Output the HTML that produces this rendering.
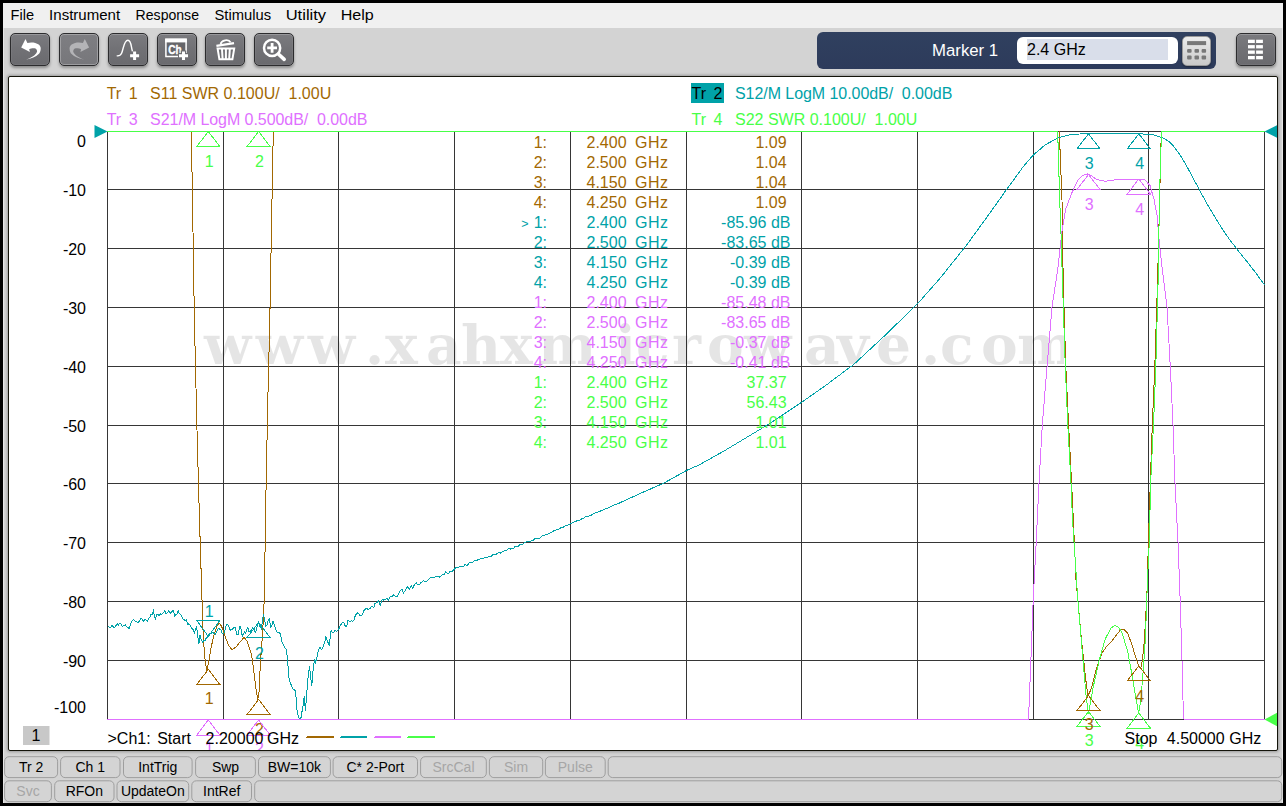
<!DOCTYPE html>
<html lang="en">
<head>
<meta charset="utf-8">
<title>Network Analyzer</title>
<style>
html,body{margin:0;padding:0;background:#000;}
body{width:1286px;height:806px;overflow:hidden;position:relative;font-family:"Liberation Sans",Arial,sans-serif;}
#win{position:absolute;left:3px;top:3px;width:1280px;height:800px;background:#d3d3d3;}
#win:before{content:"";position:absolute;left:0;top:25px;width:1px;bottom:0;background:#e6e6e6;}
#win:after{content:"";position:absolute;right:0;top:25px;width:1px;bottom:0;background:#e6e6e6;}
#menubar{position:absolute;left:3px;top:3px;width:1280px;height:25px;background:#f0f0f0;}
#menubar span{position:absolute;top:4px;font-size:15px;line-height:17px;color:#000;white-space:nowrap;transform-origin:0 50%;}
.tb{position:absolute;top:33px;width:38px;height:31px;border:1px solid #2c2c2e;border-radius:5px;background:linear-gradient(#7b7b7f 0%,#727276 45%,#6a6a6e 100%);box-shadow:0 2px 3px rgba(0,0,0,.35), inset 0 1px 0 rgba(255,255,255,.18), inset 0 0 0 1px rgba(255,255,255,.06);}
.tb.dis{background:linear-gradient(#7e7e82,#77777b);box-shadow:0 2px 3px rgba(0,0,0,.3), inset 0 0 0 1px rgba(255,255,255,.28);}
.tb svg{position:absolute;left:0;top:0;}
#mk{position:absolute;left:817px;top:32px;width:399px;height:36.5px;border-radius:6px;background:linear-gradient(#30405f,#2d3b5b);}
#mk .lbl{position:absolute;left:115px;top:9px;color:#fff;font-size:16.8px;line-height:20px;white-space:nowrap;}
#mk .inp{position:absolute;left:200px;top:4.5px;width:161px;height:27.5px;border-radius:6px;background:#fff;}
#mk .sel{position:absolute;left:10px;top:2.5px;width:141px;height:21px;background:#d9deea;}
#mk .val{position:absolute;left:10px;top:3px;font-size:16px;line-height:20px;color:#000;white-space:nowrap;}
#calc{position:absolute;left:1182px;top:36px;width:27px;height:28px;border:1px solid #9a9a9a;border-radius:5px;background:linear-gradient(#ececec,#c9c9c9);box-shadow:0 1px 2px rgba(0,0,0,.4);}
#panel{position:absolute;left:8px;top:76px;width:1268px;height:673px;border:1px solid #14140a;border-radius:2px;background:#fff;box-shadow:0 0 3px 1px rgba(0,0,0,.28);}
#plot{position:absolute;left:0;top:0;}
svg text{white-space:pre;}
.sb{position:absolute;height:19.5px;border:1px solid #a6a6a6;border-radius:5px;background:#d4d4d4;font-size:14px;line-height:20px;text-align:center;color:#000;white-space:nowrap;box-sizing:content-box;}
.sb.r1{top:756px;}
.sb.r2{top:780.5px;}
.sb.off{color:#a8a8a8;}
</style>
</head>
<body>
<div id="win"></div>
<div id="menubar">
</div>

<div class="tb" style="left:10px"><!--ICON1--></div>
<div class="tb dis" style="left:59px"><!--ICON2--></div>
<div class="tb" style="left:108px"><!--ICON3--></div>
<div class="tb" style="left:157px"><!--ICON4--></div>
<div class="tb" style="left:205px"><!--ICON5--></div>
<div class="tb" style="left:254px"><!--ICON6--></div>

<div id="mk">
  <div class="lbl">Marker 1</div>
  <div class="inp"><div class="sel"></div><div class="val">2.4 GHz</div></div>
</div>
<div id="calc"><!--ICONCALC--></div>
<div class="tb" style="left:1235.5px"><!--ICONGRID--></div>

<div id="panel"></div>
<svg id="plot" width="1286" height="806" viewBox="0 0 1286 806">
<defs><clipPath id="pc"><rect x="9" y="77" width="1268" height="673"/></clipPath></defs><g clip-path="url(#pc)">
<path d="M107.5 131.0 V720.0 M223.5 131.0 V720.0 M338.5 131.0 V720.0 M454.5 131.0 V720.0 M570.5 131.0 V720.0 M686.5 131.0 V720.0 M801.5 131.0 V720.0 M917.5 131.0 V720.0 M1033.5 131.0 V720.0 M1148.5 131.0 V720.0 M1264.5 131.0 V720.0 M107.0 131.5 H1265.0 M107.0 189.5 H1265.0 M107.0 248.5 H1265.0 M107.0 307.5 H1265.0 M107.0 366.5 H1265.0 M107.0 425.5 H1265.0 M107.0 483.5 H1265.0 M107.0 542.5 H1265.0 M107.0 601.5 H1265.0 M107.0 660.5 H1265.0 M107.0 719.5 H1265.0" stroke="#363636" stroke-width="1" fill="none" shape-rendering="crispEdges"/>
<clipPath id="wc"><rect x="200" y="300" width="864" height="90"/></clipPath>
<text x="204 255.7 307.7 365 385 426 461 500 538 615 636 672 707 744 804 837 876 921 940 981 1017" y="364.3" clip-path="url(#wc)" font-family="'DejaVu Serif','Liberation Serif',serif" font-weight="bold" font-size="55" fill="#000" fill-opacity="0.10">www.xahxmicrowave.com</text>
<polyline points="191.3,131.5 192.5,200.0 194.4,320.0 197.0,430.0 199.5,520.0 201.7,590.0 203.0,630.0 204.5,655.0 206.8,671.0 209.0,660.0 211.0,648.0 213.5,637.0 216.5,627.0 219.0,623.0 221.5,626.0 225.0,636.0 228.5,645.0 232.0,649.7 236.0,647.0 240.0,642.0 244.0,637.5 247.0,641.0 249.5,648.0 251.5,655.0 253.3,667.0 254.9,680.5 256.4,692.0 257.8,699.5 259.4,690.0 260.1,669.0 261.3,650.0 262.4,636.0 263.9,609.0 264.6,580.0 265.8,500.0 267.8,400.0 269.8,320.0 271.8,210.0 273.3,131.5" fill="none" stroke="#A26802" stroke-width="1" shape-rendering="crispEdges"/>
<polyline points="1059.3,131.5 1062.0,200.0 1063.2,280.0 1065.8,366.8 1068.6,424.8 1071.6,483.0 1073.8,530.0 1076.0,580.0 1081.4,639.0 1085.9,680.7 1088.0,695.6 1089.8,692.0 1091.8,686.7 1096.3,668.8 1102.3,652.4 1107.0,646.0 1111.2,642.0 1115.7,636.0 1120.0,630.5 1123.7,629.0 1127.6,633.0 1132.0,645.0 1136.5,660.0 1138.9,665.8 1140.3,668.0 1141.4,666.0 1142.4,660.0 1144.5,639.0 1146.9,594.4 1148.4,542.0 1150.3,483.0 1152.3,424.8 1154.8,366.8 1157.6,280.0 1159.6,200.0 1161.3,131.5" fill="none" stroke="#A26802" stroke-width="1" shape-rendering="crispEdges"/>
<polyline points="107.5,626.9 108.9,627.0 110.2,627.7 111.4,626.2 112.4,625.4 113.6,627.6 115.0,627.1 115.9,625.8 117.3,624.0 118.5,625.1 119.4,623.6 120.9,623.4 122.1,626.6 123.1,625.8 124.5,625.7 125.6,625.0 126.8,627.0 128.0,627.6 129.4,628.5 130.5,624.7 131.6,621.7 132.7,620.0 133.8,619.7 135.1,620.9 136.6,622.0 137.9,622.4 139.1,621.3 140.3,619.5 141.2,618.0 142.5,619.8 143.8,621.6 145.1,619.2 146.2,620.4 147.3,621.2 148.7,618.8 149.9,617.0 150.9,614.8 152.1,614.9 153.3,610.6 154.4,615.2 155.5,619.8 156.6,614.7 158.0,614.4 159.2,615.5 160.6,613.9 161.9,614.1 163.3,613.0 164.7,610.5 165.9,613.4 167.3,612.8 168.6,610.9 169.7,612.8 170.8,613.1 172.2,611.1 173.5,610.3 174.7,615.8 175.6,614.8 176.9,614.0 178.3,610.9 179.4,613.8 180.4,614.2 181.6,615.9 183.0,619.3 183.9,619.3 185.3,621.0 186.3,620.1 187.8,624.6 188.8,623.8 190.1,625.0 191.1,626.8 192.5,629.6 193.5,629.9 194.6,633.5 195.5,629.1 196.6,626.6 197.6,634.7 198.8,644.1 200.0,635.4 201.1,639.2 202.5,642.4 203.6,640.9 205.0,640.5 206.1,638.3 207.6,637.0 209.0,634.0 210.1,633.4 211.0,634.2 211.9,632.8 212.9,632.4 214.0,633.4 215.3,634.0 216.3,632.7 217.3,629.8 218.4,628.9 219.5,629.0 220.9,629.4 222.0,632.8 223.2,634.0 224.4,632.0 225.5,627.8 226.8,624.1 227.7,624.0 229.2,627.6 230.2,630.1 231.6,629.6 232.5,629.2 234.0,627.5 235.3,627.9 236.8,634.1 238.0,634.8 239.1,629.1 240.1,626.1 241.1,629.2 242.2,636.6 243.2,634.1 244.6,632.1 245.6,633.6 246.6,629.6 247.9,627.8 249.1,632.0 250.1,631.4 251.3,630.4 252.7,627.6 254.0,629.2 255.3,632.6 256.5,629.3 257.4,624.8 258.5,622.0 259.9,626.3 261.3,628.9 262.4,621.6 263.4,614.1 264.7,620.8 265.9,626.3 267.0,625.3 268.2,620.7 269.2,618.9 270.7,627.0 271.7,625.9 273.1,621.2 274.5,625.0 275.9,630.0 276.9,632.0 278.0,632.6 279.2,632.5 280.2,633.9 281.1,637.0 282.1,642.4 283.0,643.9 284.0,645.8 285.4,648.9 286.5,649.1 288.0,665.6 289.2,680.0 290.6,683.4 291.9,686.6 293.3,689.9 294.7,689.7 295.7,692.3 296.9,709.7 298.3,716.8 299.5,718.7 300.9,718.2 302.1,711.0 303.1,705.3 304.2,696.3 305.4,711.0 306.8,692.3 308.2,675.7 309.5,665.9 310.6,676.8 311.8,685.7 313.2,668.7 314.6,658.8 315.5,662.4 316.6,659.6 317.5,653.9 318.9,649.3 319.9,646.9 320.9,649.0 322.1,649.1 323.5,645.8 324.8,641.8 325.8,636.7 326.8,639.6 328.0,642.5 329.1,644.9 330.0,638.7 331.1,630.7 332.6,632.6 333.8,632.2 334.9,630.1 336.4,631.4 337.7,630.5 338.8,629.1 340.1,625.9 341.4,623.8 342.8,622.1 344.2,623.4 345.3,626.3 346.7,626.5 347.9,620.3 349.0,620.9 350.0,622.2 351.4,620.9 352.5,621.3 353.9,620.1 355.4,615.2 356.4,614.2 357.6,612.9 358.6,613.4 360.1,615.9 362.2,614.7 364.4,609.5 366.5,608.5 368.0,609.2 370.2,608.5 371.7,606.2 373.8,607.3 375.1,603.2 376.7,602.9 378.5,601.1 380.3,605.5 382.3,599.5 383.7,600.1 385.6,599.1 387.0,598.2 388.4,599.8 390.3,596.8 392.2,596.3 393.9,594.8 395.6,596.7 397.6,596.0 398.9,592.9 400.5,590.3 402.1,589.4 403.5,592.9 405.4,590.6 406.7,587.6 407.9,586.7 409.2,589.8 411.3,585.5 412.8,588.1 414.5,584.6 416.2,582.7 418.0,585.2 419.7,584.3 421.0,582.7 423.2,580.8 424.9,581.4 426.4,581.8 428.1,579.9 430.2,578.0 432.3,577.6 433.9,578.0 435.6,576.3 437.1,576.6 439.2,577.1 441.0,576.3 443.1,574.0 444.4,574.0 445.9,571.8 448.1,574.2 449.8,571.7 451.7,571.7 453.4,570.1 454.8,568.6 456.5,567.3 457.7,567.7 459.7,566.7 461.8,567.0 463.6,566.7 464.9,564.4 467.0,565.4 468.3,564.6 469.5,562.4 470.8,562.5 472.4,562.9 474.0,561.0 475.5,560.3 476.7,560.5 478.4,559.4 480.0,558.9 481.9,558.8 483.2,558.5 484.6,557.7 486.0,558.0 487.5,557.8 489.1,556.0 491.0,556.5 493.0,554.6 495.0,555.1 496.5,553.9 498.4,552.7 500.4,553.0 502.5,551.8 504.2,550.7 505.7,551.0 507.9,549.2 509.1,548.1 510.8,549.1 512.2,548.0 513.9,548.0 515.3,546.1 517.0,546.0 518.5,546.1 520.3,544.3 522.1,544.7 524.2,542.6 526.2,541.9 528.1,542.0 530.2,541.2 531.5,540.7 533.0,540.4 534.2,539.1 536.1,538.1 537.9,538.2 539.9,538.1 541.5,536.2 542.9,535.8 544.2,535.5 545.5,534.5 547.6,534.2 549.0,533.3 551.1,532.6 552.5,531.8 554.6,530.2 556.8,529.9 558.2,529.5 559.4,528.6 561.2,527.7 563.3,527.1 564.7,526.0 565.9,525.8 567.3,525.1 569.3,524.7 570.6,523.4 572.3,522.8 573.9,522.2 575.8,521.3 577.4,520.6 578.7,520.4 580.3,519.9 582.3,518.3 583.8,518.3 585.6,516.7 587.4,516.5 589.4,516.0 591.5,515.0 593.6,513.8 595.1,513.0 597.2,512.2 599.0,511.7 601.0,510.8 602.3,510.2 603.6,509.6 605.4,508.7 607.6,508.1 609.1,507.9 610.4,506.8 612.6,505.8 614.5,504.9 616.2,504.6 617.6,503.6 619.4,503.1 620.7,502.4 623.7,501.0 626.7,499.7 629.7,498.3 632.7,496.9 635.7,495.5 638.7,494.1 641.7,492.8 644.7,491.5 647.7,490.2 650.7,488.9 653.7,487.5 656.7,486.2 659.7,484.9 662.7,483.6 665.7,482.1 668.7,480.4 671.7,478.7 674.7,477.1 677.7,475.4 680.7,473.8 683.7,472.1 686.7,470.4 689.7,469.1 692.7,467.8 695.7,466.4 698.7,465.1 701.7,463.5 704.7,461.8 707.7,460.2 710.7,458.5 713.7,456.8 716.7,455.1 719.7,453.4 722.7,451.8 725.7,450.0 728.7,448.2 731.7,446.4 734.7,444.6 737.7,442.8 740.7,441.0 743.7,439.2 746.7,437.4 749.7,435.6 752.7,433.8 755.7,432.0 758.7,430.2 761.7,428.4 764.7,426.6 767.7,424.7 770.7,422.8 773.7,420.8 776.7,418.8 779.7,416.8 782.7,414.8 785.7,412.8 788.7,410.8 791.7,408.8 794.7,406.8 797.7,404.9 800.7,402.9 803.7,400.8 806.7,398.7 809.7,396.6 812.7,394.5 815.7,392.4 818.7,390.3 821.7,388.2 824.7,386.1 827.7,384.0 830.7,381.7 833.7,379.5 836.7,377.2 839.7,375.0 842.7,372.7 845.7,370.5 848.7,368.2 851.7,366.0 854.7,363.5 857.7,360.8 860.7,358.0 863.7,355.2 866.7,352.4 869.7,349.6 872.7,346.8 875.7,344.1 878.7,341.3 881.7,338.5 884.7,335.7 887.7,332.8 890.7,329.8 893.7,326.9 896.7,324.0 899.7,321.1 902.7,318.2 905.7,315.2 908.7,312.3 911.7,309.4 914.7,306.5 917.7,303.5 920.7,300.2 923.7,296.8 926.7,293.4 929.7,290.0 932.7,286.6 935.7,283.2 938.7,279.8 941.7,276.3 944.7,272.5 947.7,268.7 950.7,265.0 953.7,261.2 956.7,257.5 959.7,253.7 962.7,249.9 965.7,246.2 968.7,242.2 971.7,238.0 974.7,233.9 977.7,229.8 980.7,225.7 983.7,221.6 986.7,217.4 989.7,213.2 992.7,209.0 995.7,204.8 998.7,200.6 1001.7,196.4 1004.7,192.1 1007.7,188.0 1010.7,183.9 1013.7,179.8 1016.7,175.6 1019.7,171.5 1022.7,167.4 1025.7,163.8 1028.7,160.3 1031.7,156.8 1034.7,153.7 1037.7,151.2 1040.7,148.7 1043.7,146.1 1046.7,144.1 1049.7,142.4 1052.7,140.7 1055.7,139.0 1058.7,137.6 1061.7,136.8 1064.7,136.1 1067.7,135.3 1070.7,134.5 1073.7,134.4 1076.7,134.2 1079.7,134.0 1082.7,133.9 1085.7,133.7 1088.7,133.6 1091.7,133.6 1094.7,133.5 1097.7,133.5 1100.7,133.5 1103.7,133.5 1106.7,133.5 1109.7,133.4 1112.7,133.4 1115.7,133.4 1118.7,133.5 1121.7,133.5 1124.7,133.6 1127.7,133.6 1130.7,133.7 1133.7,133.7 1136.7,133.8 1139.7,133.9 1142.7,134.0 1145.7,134.2 1148.7,134.4 1151.7,134.5 1154.7,135.2 1157.7,136.2 1160.7,137.2 1163.7,138.4 1166.7,140.2 1169.7,142.1 1172.7,145.2 1175.7,149.1 1178.7,153.0 1181.7,157.4 1184.7,162.7 1187.7,168.0 1190.7,173.5 1193.7,179.2 1196.7,184.8 1199.7,190.4 1202.7,195.9 1205.7,201.3 1208.7,206.8 1209.6,208.4 1211.3,211.1 1213.6,214.9 1216.4,219.5 1219.3,224.2 1222.3,228.9 1225.0,233.0 1227.6,236.7 1230.1,240.2 1232.7,243.6 1235.2,246.9 1237.7,250.0 1240.0,253.0 1242.2,255.8 1244.2,258.3 1246.2,260.7 1248.1,263.0 1250.0,265.4 1252.0,268.0 1254.2,270.9 1256.6,274.1 1259.0,277.4 1261.2,280.5 1263.1,283.1 1264.5,285.0" fill="none" stroke="#00A2A8" stroke-width="1" shape-rendering="crispEdges"/>
<polyline points="107.0,719.5 1028.5,719.5" fill="none" stroke="#E070FF" stroke-width="1" shape-rendering="crispEdges"/>
<polyline points="1028.5,719.5 1030.8,662.9 1033.2,600.0 1036.2,542.0 1039.0,483.0 1042.3,424.8 1047.0,366.8 1052.0,307.0 1057.7,270.0 1062.0,231.0 1065.6,209.4 1071.6,193.5 1077.5,180.6 1082.5,175.6 1087.5,174.0 1091.0,175.5 1095.4,178.6 1100.0,180.5 1105.3,181.2 1117.2,179.6 1137.1,179.0 1145.0,180.0 1150.0,185.5 1154.0,199.4 1157.0,215.3 1159.0,239.2 1162.0,267.0 1167.0,307.0 1170.3,366.8 1173.0,424.8 1175.0,483.0 1178.0,542.0 1180.2,601.0 1182.0,660.0 1183.5,719.5" fill="none" stroke="#E070FF" stroke-width="1" shape-rendering="crispEdges"/>
<polyline points="1183.5,719.5 1264.5,719.5" fill="none" stroke="#E070FF" stroke-width="1" shape-rendering="crispEdges"/>
<polyline points="107.0,131.5 1057.7,131.5" fill="none" stroke="#48FF48" stroke-width="1" shape-rendering="crispEdges"/>
<polyline points="1057.7,131.5 1059.7,199.4 1061.2,239.0 1062.4,280.0 1065.3,366.8 1067.8,424.8 1071.0,483.0 1072.5,520.0 1074.0,542.0 1077.9,601.0 1083.0,660.0 1086.0,695.0 1088.5,713.5 1090.5,702.0 1093.3,686.7 1099.3,660.0 1105.2,639.0 1111.2,627.7 1114.8,625.6 1118.0,627.0 1121.6,631.6 1127.6,651.0 1132.0,674.8 1136.5,701.5 1138.6,713.5 1141.0,698.6 1143.3,668.8 1145.4,639.0 1147.5,579.5 1149.3,542.0 1150.6,483.0 1153.5,424.8 1155.8,366.8 1158.4,270.0 1159.4,199.0 1161.5,131.5" fill="none" stroke="#48FF48" stroke-width="1" shape-rendering="crispEdges"/>
<polyline points="1161.5,131.5 1265.0,131.5" fill="none" stroke="#48FF48" stroke-width="1" shape-rendering="crispEdges"/>
<polygon points="94.5,125 107.5,131.5 94.5,138" fill="#00A2A8"/>
<polygon points="1277.5,125 1264.5,131.5 1277.5,138" fill="#00A2A8"/>
<polygon points="1277.5,712.5 1264.5,719.5 1277.5,726.5" fill="#48FF48"/>
<polygon points="208.3,131.5 196.8,146.5 219.8,146.5" fill="none" stroke="#48FF48" stroke-width="1" shape-rendering="crispEdges"/>
<text x="209.1" y="166.5" fill="#48FF48" text-anchor="middle" font-family="'Liberation Sans',Arial,sans-serif" font-size="16" xml:space="preserve" >1</text>
<polygon points="258.6,131.5 247.1,146.5 270.1,146.5" fill="none" stroke="#48FF48" stroke-width="1" shape-rendering="crispEdges"/>
<text x="259.4" y="166.5" fill="#48FF48" text-anchor="middle" font-family="'Liberation Sans',Arial,sans-serif" font-size="16" xml:space="preserve" >2</text>
<polygon points="1088.5,711.5 1077.0,726.5 1100.0,726.5" fill="none" stroke="#48FF48" stroke-width="1" shape-rendering="crispEdges"/>
<text x="1089.3" y="746" fill="#48FF48" text-anchor="middle" font-family="'Liberation Sans',Arial,sans-serif" font-size="16" xml:space="preserve" >3</text>
<polygon points="1138.8,713.0 1127.3,728.0 1150.3,728.0" fill="none" stroke="#48FF48" stroke-width="1" shape-rendering="crispEdges"/>
<text x="1139.6" y="749" fill="#48FF48" text-anchor="middle" font-family="'Liberation Sans',Arial,sans-serif" font-size="16" xml:space="preserve" >4</text>
<polygon points="208.3,669.4 196.8,684.4 219.8,684.4" fill="none" stroke="#A26802" stroke-width="1" shape-rendering="crispEdges"/>
<text x="209.1" y="704" fill="#A26802" text-anchor="middle" font-family="'Liberation Sans',Arial,sans-serif" font-size="16" xml:space="preserve" >1</text>
<polygon points="258.6,699.5 247.1,714.5 270.1,714.5" fill="none" stroke="#A26802" stroke-width="1" shape-rendering="crispEdges"/>
<text x="259.4" y="734.5" fill="#A26802" text-anchor="middle" font-family="'Liberation Sans',Arial,sans-serif" font-size="16" xml:space="preserve" >2</text>
<polygon points="1088.5,695.6 1077.0,710.6 1100.0,710.6" fill="none" stroke="#A26802" stroke-width="1" shape-rendering="crispEdges"/>
<text x="1089.3" y="730" fill="#A26802" text-anchor="middle" font-family="'Liberation Sans',Arial,sans-serif" font-size="16" xml:space="preserve" >3</text>
<polygon points="1138.8,665.8 1127.3,680.8 1150.3,680.8" fill="none" stroke="#A26802" stroke-width="1" shape-rendering="crispEdges"/>
<text x="1139.6" y="702" fill="#A26802" text-anchor="middle" font-family="'Liberation Sans',Arial,sans-serif" font-size="16" xml:space="preserve" >4</text>
<polygon points="208.3,636.5 196.8,620.5 219.8,620.5" fill="none" stroke="#00A2A8" stroke-width="1" shape-rendering="crispEdges"/>
<text x="209.1" y="617" fill="#00A2A8" text-anchor="middle" font-family="'Liberation Sans',Arial,sans-serif" font-size="16" xml:space="preserve" >1</text>
<polygon points="258.6,622.5 247.1,637.5 270.1,637.5" fill="none" stroke="#00A2A8" stroke-width="1" shape-rendering="crispEdges"/>
<text x="259.4" y="659.3" fill="#00A2A8" text-anchor="middle" font-family="'Liberation Sans',Arial,sans-serif" font-size="16" xml:space="preserve" >2</text>
<polygon points="1088.5,133.8 1077.0,148.8 1100.0,148.8" fill="none" stroke="#00A2A8" stroke-width="1" shape-rendering="crispEdges"/>
<text x="1089.3" y="169" fill="#00A2A8" text-anchor="middle" font-family="'Liberation Sans',Arial,sans-serif" font-size="16" xml:space="preserve" >3</text>
<polygon points="1138.8,133.8 1127.3,148.8 1150.3,148.8" fill="none" stroke="#00A2A8" stroke-width="1" shape-rendering="crispEdges"/>
<text x="1139.6" y="169" fill="#00A2A8" text-anchor="middle" font-family="'Liberation Sans',Arial,sans-serif" font-size="16" xml:space="preserve" >4</text>
<polygon points="208.3,720.0 196.8,735.0 219.8,735.0" fill="none" stroke="#E070FF" stroke-width="1" shape-rendering="crispEdges"/>
<text x="209.1" y="754" fill="#E070FF" text-anchor="middle" font-family="'Liberation Sans',Arial,sans-serif" font-size="16" xml:space="preserve" >1</text>
<polygon points="258.6,720.0 247.1,735.0 270.1,735.0" fill="none" stroke="#E070FF" stroke-width="1" shape-rendering="crispEdges"/>
<text x="259.4" y="754" fill="#E070FF" text-anchor="middle" font-family="'Liberation Sans',Arial,sans-serif" font-size="16" xml:space="preserve" >2</text>
<polygon points="1088.5,174.5 1077.0,189.5 1100.0,189.5" fill="none" stroke="#E070FF" stroke-width="1" shape-rendering="crispEdges"/>
<text x="1089.3" y="209.5" fill="#E070FF" text-anchor="middle" font-family="'Liberation Sans',Arial,sans-serif" font-size="16" xml:space="preserve" >3</text>
<polygon points="1138.8,179.0 1127.3,194.0 1150.3,194.0" fill="none" stroke="#E070FF" stroke-width="1" shape-rendering="crispEdges"/>
<text x="1139.6" y="215" fill="#E070FF" text-anchor="middle" font-family="'Liberation Sans',Arial,sans-serif" font-size="16" xml:space="preserve" >4</text>
<text x="106.7" y="98.7" fill="#A26802" text-anchor="start" font-family="'Liberation Sans',Arial,sans-serif" font-size="16" xml:space="preserve" >Tr</text>
<text x="128.7" y="98.7" fill="#A26802" text-anchor="start" font-family="'Liberation Sans',Arial,sans-serif" font-size="16" xml:space="preserve" >1</text>
<text x="150.1" y="98.7" fill="#A26802" text-anchor="start" font-family="'Liberation Sans',Arial,sans-serif" font-size="16" xml:space="preserve" >S11 SWR 0.100U/  1.00U</text>
<text x="106.7" y="124.7" fill="#E070FF" text-anchor="start" font-family="'Liberation Sans',Arial,sans-serif" font-size="16" xml:space="preserve" >Tr</text>
<text x="128.7" y="124.7" fill="#E070FF" text-anchor="start" font-family="'Liberation Sans',Arial,sans-serif" font-size="16" xml:space="preserve" >3</text>
<text x="150.1" y="124.7" fill="#E070FF" text-anchor="start" font-family="'Liberation Sans',Arial,sans-serif" font-size="16" xml:space="preserve" textLength="217.3" lengthAdjust="spacing">S21/M LogM 0.500dB/  0.00dB</text>
<rect x="691" y="83" width="33" height="20" fill="#00A2A8"/>
<text x="691.6" y="98.7" fill="#000" text-anchor="start" font-family="'Liberation Sans',Arial,sans-serif" font-size="16" xml:space="preserve" >Tr</text>
<text x="713.6" y="98.7" fill="#000" text-anchor="start" font-family="'Liberation Sans',Arial,sans-serif" font-size="16" xml:space="preserve" >2</text>
<text x="735.0" y="98.7" fill="#00A2A8" text-anchor="start" font-family="'Liberation Sans',Arial,sans-serif" font-size="16" xml:space="preserve" textLength="217.3" lengthAdjust="spacing">S12/M LogM 10.00dB/  0.00dB</text>
<text x="691.6" y="124.7" fill="#48FF48" text-anchor="start" font-family="'Liberation Sans',Arial,sans-serif" font-size="16" xml:space="preserve" >Tr</text>
<text x="713.6" y="124.7" fill="#48FF48" text-anchor="start" font-family="'Liberation Sans',Arial,sans-serif" font-size="16" xml:space="preserve" >4</text>
<text x="735.0" y="124.7" fill="#48FF48" text-anchor="start" font-family="'Liberation Sans',Arial,sans-serif" font-size="16" xml:space="preserve" >S22 SWR 0.100U/  1.00U</text>
<text x="86" y="147" fill="#000" text-anchor="end" font-family="'Liberation Sans',Arial,sans-serif" font-size="16" xml:space="preserve" >0</text>
<text x="86" y="195.8" fill="#000" text-anchor="end" font-family="'Liberation Sans',Arial,sans-serif" font-size="16" xml:space="preserve" >-10</text>
<text x="86" y="254.8" fill="#000" text-anchor="end" font-family="'Liberation Sans',Arial,sans-serif" font-size="16" xml:space="preserve" >-20</text>
<text x="86" y="313.8" fill="#000" text-anchor="end" font-family="'Liberation Sans',Arial,sans-serif" font-size="16" xml:space="preserve" >-30</text>
<text x="86" y="372.8" fill="#000" text-anchor="end" font-family="'Liberation Sans',Arial,sans-serif" font-size="16" xml:space="preserve" >-40</text>
<text x="86" y="431.8" fill="#000" text-anchor="end" font-family="'Liberation Sans',Arial,sans-serif" font-size="16" xml:space="preserve" >-50</text>
<text x="86" y="489.8" fill="#000" text-anchor="end" font-family="'Liberation Sans',Arial,sans-serif" font-size="16" xml:space="preserve" >-60</text>
<text x="86" y="548.8" fill="#000" text-anchor="end" font-family="'Liberation Sans',Arial,sans-serif" font-size="16" xml:space="preserve" >-70</text>
<text x="86" y="607.8" fill="#000" text-anchor="end" font-family="'Liberation Sans',Arial,sans-serif" font-size="16" xml:space="preserve" >-80</text>
<text x="86" y="666.8" fill="#000" text-anchor="end" font-family="'Liberation Sans',Arial,sans-serif" font-size="16" xml:space="preserve" >-90</text>
<text x="86" y="712.6" fill="#000" text-anchor="end" font-family="'Liberation Sans',Arial,sans-serif" font-size="16" xml:space="preserve" >-100</text>
<text x="547" y="148" fill="#A26802" text-anchor="end" font-family="'Liberation Sans',Arial,sans-serif" font-size="16" xml:space="preserve" >1:</text>
<text x="586.5" y="148" fill="#A26802" text-anchor="start" font-family="'Liberation Sans',Arial,sans-serif" font-size="16" xml:space="preserve" >2.400</text>
<text x="635" y="148" fill="#A26802" text-anchor="start" font-family="'Liberation Sans',Arial,sans-serif" font-size="16" xml:space="preserve" textLength="33" lengthAdjust="spacing">GHz</text>
<text x="786.6" y="148" fill="#A26802" text-anchor="end" font-family="'Liberation Sans',Arial,sans-serif" font-size="16" xml:space="preserve" >1.09</text>
<text x="547" y="168" fill="#A26802" text-anchor="end" font-family="'Liberation Sans',Arial,sans-serif" font-size="16" xml:space="preserve" >2:</text>
<text x="586.5" y="168" fill="#A26802" text-anchor="start" font-family="'Liberation Sans',Arial,sans-serif" font-size="16" xml:space="preserve" >2.500</text>
<text x="635" y="168" fill="#A26802" text-anchor="start" font-family="'Liberation Sans',Arial,sans-serif" font-size="16" xml:space="preserve" textLength="33" lengthAdjust="spacing">GHz</text>
<text x="786.6" y="168" fill="#A26802" text-anchor="end" font-family="'Liberation Sans',Arial,sans-serif" font-size="16" xml:space="preserve" >1.04</text>
<text x="547" y="188" fill="#A26802" text-anchor="end" font-family="'Liberation Sans',Arial,sans-serif" font-size="16" xml:space="preserve" >3:</text>
<text x="586.5" y="188" fill="#A26802" text-anchor="start" font-family="'Liberation Sans',Arial,sans-serif" font-size="16" xml:space="preserve" >4.150</text>
<text x="635" y="188" fill="#A26802" text-anchor="start" font-family="'Liberation Sans',Arial,sans-serif" font-size="16" xml:space="preserve" textLength="33" lengthAdjust="spacing">GHz</text>
<text x="786.6" y="188" fill="#A26802" text-anchor="end" font-family="'Liberation Sans',Arial,sans-serif" font-size="16" xml:space="preserve" >1.04</text>
<text x="547" y="208" fill="#A26802" text-anchor="end" font-family="'Liberation Sans',Arial,sans-serif" font-size="16" xml:space="preserve" >4:</text>
<text x="586.5" y="208" fill="#A26802" text-anchor="start" font-family="'Liberation Sans',Arial,sans-serif" font-size="16" xml:space="preserve" >4.250</text>
<text x="635" y="208" fill="#A26802" text-anchor="start" font-family="'Liberation Sans',Arial,sans-serif" font-size="16" xml:space="preserve" textLength="33" lengthAdjust="spacing">GHz</text>
<text x="786.6" y="208" fill="#A26802" text-anchor="end" font-family="'Liberation Sans',Arial,sans-serif" font-size="16" xml:space="preserve" >1.09</text>
<text x="521.3" y="227.5" fill="#00A2A8" text-anchor="start" font-family="'Liberation Sans',Arial,sans-serif" font-size="16" xml:space="preserve" style="font-size:12.5px">&gt;</text>
<text x="547" y="228" fill="#00A2A8" text-anchor="end" font-family="'Liberation Sans',Arial,sans-serif" font-size="16" xml:space="preserve" >1:</text>
<text x="586.5" y="228" fill="#00A2A8" text-anchor="start" font-family="'Liberation Sans',Arial,sans-serif" font-size="16" xml:space="preserve" >2.400</text>
<text x="635" y="228" fill="#00A2A8" text-anchor="start" font-family="'Liberation Sans',Arial,sans-serif" font-size="16" xml:space="preserve" textLength="33" lengthAdjust="spacing">GHz</text>
<text x="790.5" y="228" fill="#00A2A8" text-anchor="end" font-family="'Liberation Sans',Arial,sans-serif" font-size="16" xml:space="preserve" >-85.96 dB</text>
<text x="547" y="248" fill="#00A2A8" text-anchor="end" font-family="'Liberation Sans',Arial,sans-serif" font-size="16" xml:space="preserve" >2:</text>
<text x="586.5" y="248" fill="#00A2A8" text-anchor="start" font-family="'Liberation Sans',Arial,sans-serif" font-size="16" xml:space="preserve" >2.500</text>
<text x="635" y="248" fill="#00A2A8" text-anchor="start" font-family="'Liberation Sans',Arial,sans-serif" font-size="16" xml:space="preserve" textLength="33" lengthAdjust="spacing">GHz</text>
<text x="790.5" y="248" fill="#00A2A8" text-anchor="end" font-family="'Liberation Sans',Arial,sans-serif" font-size="16" xml:space="preserve" >-83.65 dB</text>
<text x="547" y="268" fill="#00A2A8" text-anchor="end" font-family="'Liberation Sans',Arial,sans-serif" font-size="16" xml:space="preserve" >3:</text>
<text x="586.5" y="268" fill="#00A2A8" text-anchor="start" font-family="'Liberation Sans',Arial,sans-serif" font-size="16" xml:space="preserve" >4.150</text>
<text x="635" y="268" fill="#00A2A8" text-anchor="start" font-family="'Liberation Sans',Arial,sans-serif" font-size="16" xml:space="preserve" textLength="33" lengthAdjust="spacing">GHz</text>
<text x="790.5" y="268" fill="#00A2A8" text-anchor="end" font-family="'Liberation Sans',Arial,sans-serif" font-size="16" xml:space="preserve" >-0.39 dB</text>
<text x="547" y="288" fill="#00A2A8" text-anchor="end" font-family="'Liberation Sans',Arial,sans-serif" font-size="16" xml:space="preserve" >4:</text>
<text x="586.5" y="288" fill="#00A2A8" text-anchor="start" font-family="'Liberation Sans',Arial,sans-serif" font-size="16" xml:space="preserve" >4.250</text>
<text x="635" y="288" fill="#00A2A8" text-anchor="start" font-family="'Liberation Sans',Arial,sans-serif" font-size="16" xml:space="preserve" textLength="33" lengthAdjust="spacing">GHz</text>
<text x="790.5" y="288" fill="#00A2A8" text-anchor="end" font-family="'Liberation Sans',Arial,sans-serif" font-size="16" xml:space="preserve" >-0.39 dB</text>
<text x="547" y="308" fill="#E070FF" text-anchor="end" font-family="'Liberation Sans',Arial,sans-serif" font-size="16" xml:space="preserve" >1:</text>
<text x="586.5" y="308" fill="#E070FF" text-anchor="start" font-family="'Liberation Sans',Arial,sans-serif" font-size="16" xml:space="preserve" >2.400</text>
<text x="635" y="308" fill="#E070FF" text-anchor="start" font-family="'Liberation Sans',Arial,sans-serif" font-size="16" xml:space="preserve" textLength="33" lengthAdjust="spacing">GHz</text>
<text x="790.5" y="308" fill="#E070FF" text-anchor="end" font-family="'Liberation Sans',Arial,sans-serif" font-size="16" xml:space="preserve" >-85.48 dB</text>
<text x="547" y="328" fill="#E070FF" text-anchor="end" font-family="'Liberation Sans',Arial,sans-serif" font-size="16" xml:space="preserve" >2:</text>
<text x="586.5" y="328" fill="#E070FF" text-anchor="start" font-family="'Liberation Sans',Arial,sans-serif" font-size="16" xml:space="preserve" >2.500</text>
<text x="635" y="328" fill="#E070FF" text-anchor="start" font-family="'Liberation Sans',Arial,sans-serif" font-size="16" xml:space="preserve" textLength="33" lengthAdjust="spacing">GHz</text>
<text x="790.5" y="328" fill="#E070FF" text-anchor="end" font-family="'Liberation Sans',Arial,sans-serif" font-size="16" xml:space="preserve" >-83.65 dB</text>
<text x="547" y="348" fill="#E070FF" text-anchor="end" font-family="'Liberation Sans',Arial,sans-serif" font-size="16" xml:space="preserve" >3:</text>
<text x="586.5" y="348" fill="#E070FF" text-anchor="start" font-family="'Liberation Sans',Arial,sans-serif" font-size="16" xml:space="preserve" >4.150</text>
<text x="635" y="348" fill="#E070FF" text-anchor="start" font-family="'Liberation Sans',Arial,sans-serif" font-size="16" xml:space="preserve" textLength="33" lengthAdjust="spacing">GHz</text>
<text x="790.5" y="348" fill="#E070FF" text-anchor="end" font-family="'Liberation Sans',Arial,sans-serif" font-size="16" xml:space="preserve" >-0.37 dB</text>
<text x="547" y="368" fill="#E070FF" text-anchor="end" font-family="'Liberation Sans',Arial,sans-serif" font-size="16" xml:space="preserve" >4:</text>
<text x="586.5" y="368" fill="#E070FF" text-anchor="start" font-family="'Liberation Sans',Arial,sans-serif" font-size="16" xml:space="preserve" >4.250</text>
<text x="635" y="368" fill="#E070FF" text-anchor="start" font-family="'Liberation Sans',Arial,sans-serif" font-size="16" xml:space="preserve" textLength="33" lengthAdjust="spacing">GHz</text>
<text x="790.5" y="368" fill="#E070FF" text-anchor="end" font-family="'Liberation Sans',Arial,sans-serif" font-size="16" xml:space="preserve" >-0.41 dB</text>
<text x="547" y="388" fill="#48FF48" text-anchor="end" font-family="'Liberation Sans',Arial,sans-serif" font-size="16" xml:space="preserve" >1:</text>
<text x="586.5" y="388" fill="#48FF48" text-anchor="start" font-family="'Liberation Sans',Arial,sans-serif" font-size="16" xml:space="preserve" >2.400</text>
<text x="635" y="388" fill="#48FF48" text-anchor="start" font-family="'Liberation Sans',Arial,sans-serif" font-size="16" xml:space="preserve" textLength="33" lengthAdjust="spacing">GHz</text>
<text x="786.6" y="388" fill="#48FF48" text-anchor="end" font-family="'Liberation Sans',Arial,sans-serif" font-size="16" xml:space="preserve" >37.37</text>
<text x="547" y="408" fill="#48FF48" text-anchor="end" font-family="'Liberation Sans',Arial,sans-serif" font-size="16" xml:space="preserve" >2:</text>
<text x="586.5" y="408" fill="#48FF48" text-anchor="start" font-family="'Liberation Sans',Arial,sans-serif" font-size="16" xml:space="preserve" >2.500</text>
<text x="635" y="408" fill="#48FF48" text-anchor="start" font-family="'Liberation Sans',Arial,sans-serif" font-size="16" xml:space="preserve" textLength="33" lengthAdjust="spacing">GHz</text>
<text x="786.6" y="408" fill="#48FF48" text-anchor="end" font-family="'Liberation Sans',Arial,sans-serif" font-size="16" xml:space="preserve" >56.43</text>
<text x="547" y="428" fill="#48FF48" text-anchor="end" font-family="'Liberation Sans',Arial,sans-serif" font-size="16" xml:space="preserve" >3:</text>
<text x="586.5" y="428" fill="#48FF48" text-anchor="start" font-family="'Liberation Sans',Arial,sans-serif" font-size="16" xml:space="preserve" >4.150</text>
<text x="635" y="428" fill="#48FF48" text-anchor="start" font-family="'Liberation Sans',Arial,sans-serif" font-size="16" xml:space="preserve" textLength="33" lengthAdjust="spacing">GHz</text>
<text x="786.6" y="428" fill="#48FF48" text-anchor="end" font-family="'Liberation Sans',Arial,sans-serif" font-size="16" xml:space="preserve" >1.01</text>
<text x="547" y="448" fill="#48FF48" text-anchor="end" font-family="'Liberation Sans',Arial,sans-serif" font-size="16" xml:space="preserve" >4:</text>
<text x="586.5" y="448" fill="#48FF48" text-anchor="start" font-family="'Liberation Sans',Arial,sans-serif" font-size="16" xml:space="preserve" >4.250</text>
<text x="635" y="448" fill="#48FF48" text-anchor="start" font-family="'Liberation Sans',Arial,sans-serif" font-size="16" xml:space="preserve" textLength="33" lengthAdjust="spacing">GHz</text>
<text x="786.6" y="448" fill="#48FF48" text-anchor="end" font-family="'Liberation Sans',Arial,sans-serif" font-size="16" xml:space="preserve" >1.01</text>
<text x="107.5" y="743.5" fill="#000" text-anchor="start" font-family="'Liberation Sans',Arial,sans-serif" font-size="16" xml:space="preserve" >&gt;Ch1:</text>
<text x="157.2" y="743.5" fill="#000" text-anchor="start" font-family="'Liberation Sans',Arial,sans-serif" font-size="16" xml:space="preserve" >Start</text>
<text x="205.6" y="743.5" fill="#000" text-anchor="start" font-family="'Liberation Sans',Arial,sans-serif" font-size="16" xml:space="preserve" >2.20000</text>
<text x="267" y="743.5" fill="#000" text-anchor="start" font-family="'Liberation Sans',Arial,sans-serif" font-size="16" xml:space="preserve" >GHz</text>
<text x="1124.6" y="743.5" fill="#000" text-anchor="start" font-family="'Liberation Sans',Arial,sans-serif" font-size="16" xml:space="preserve" >Stop</text>
<text x="1166.8" y="743.5" fill="#000" text-anchor="start" font-family="'Liberation Sans',Arial,sans-serif" font-size="16" xml:space="preserve" >4.50000</text>
<text x="1229.3" y="743.5" fill="#000" text-anchor="start" font-family="'Liberation Sans',Arial,sans-serif" font-size="16" xml:space="preserve" >GHz</text>
<path d="M307 736 H334 V738 H306 V737 H307 Z" fill="#A26802" shape-rendering="crispEdges"/>
<path d="M341 736 H367 V738 H340 V737 H341 Z" fill="#00A2A8" shape-rendering="crispEdges"/>
<path d="M375 736 H401 V738 H374 V737 H375 Z" fill="#E070FF" shape-rendering="crispEdges"/>
<path d="M408 736 H435 V738 H407 V737 H408 Z" fill="#48FF48" shape-rendering="crispEdges"/>
<rect x="23" y="726" width="26.5" height="19" fill="#c8c8c8"/>
<text x="36" y="741" fill="#000" text-anchor="middle" font-family="'Liberation Sans',Arial,sans-serif" font-size="16" xml:space="preserve" >1</text>
</g>
<path d="M21.2 47.5 L25.5 39.1 L27.4 43 C30 42.2 35.5 42 38.7 44.6 C40.3 46 40.9 47.5 40.7 49 C40.5 51.5 39.8 53 38.7 54.1 C36 57 31 59 26.3 59.6 C30 58.3 34 56 36.1 53.4 C37 52.3 37.2 51.5 37 50.8 C36.8 49.7 36 49 35.4 48.6 C34 48 31 48.3 29.2 49.2 L29.9 51.9 Z" fill="#fff"/>
<path d="M21.2 47.5 L25.5 39.1 L27.4 43 C30 42.2 35.5 42 38.7 44.6 C40.3 46 40.9 47.5 40.7 49 C40.5 51.5 39.8 53 38.7 54.1 C36 57 31 59 26.3 59.6 C30 58.3 34 56 36.1 53.4 C37 52.3 37.2 51.5 37 50.8 C36.8 49.7 36 49 35.4 48.6 C34 48 31 48.3 29.2 49.2 L29.9 51.9 Z" fill="#b4b4b7" transform="translate(110.3,0) scale(-1,1)"/>
<path d="M117.2 55.9 C119.3 56 120.6 55.6 121.6 53.3 C123.6 48.5 123.9 40.2 127.9 40.2 C131.2 40.2 131 46 132.3 50.8" fill="none" stroke="#fff" stroke-width="1.4" stroke-linecap="round"/>
<path d="M130.1 55.7 H139.1 M134.6 51.4 V60" stroke="#fff" stroke-width="3" fill="none"/>
<rect x="165.9" y="39.3" width="20.2" height="17.2" fill="#66666a" stroke="#fff" stroke-width="1.5"/>
<rect x="165.2" y="38.6" width="21.6" height="3.8" fill="#fff"/>
<text x="168.2" y="53.6" font-family="'Liberation Sans',Arial,sans-serif" font-weight="bold" font-size="12" fill="#fff" stroke="#fff" stroke-width="0.4" textLength="13.5" lengthAdjust="spacingAndGlyphs">Ch</text>
<path d="M178 55.7 H189 M183.5 50.4 V61" stroke="#707074" stroke-width="5.4" fill="none"/>
<path d="M179 55.7 H188 M183.5 51.4 V60" stroke="#fff" stroke-width="3" fill="none"/>
<path d="M216.4 45.9 L234 43.2" stroke="#fff" stroke-width="2.2" fill="none"/>
<path d="M220.6 44 C221.5 40.2 228.5 38.6 230.6 42.4" stroke="#fff" stroke-width="1.8" fill="none"/>
<path d="M217.6 48.6 H234.2 L232.4 59.3 H219.4 Z" fill="#6e6e72" stroke="#fff" stroke-width="2" stroke-linejoin="miter"/>
<path d="M222 49 L222.6 59 M225.9 49 V59 M229.8 49 L229.2 59" stroke="#fff" stroke-width="2" fill="none"/>
<circle cx="272.1" cy="47.9" r="8.1" fill="none" stroke="#fff" stroke-width="2.5"/>
<path d="M267.2 47.9 H277 M272.1 43 V52.8" stroke="#fff" stroke-width="2.8" fill="none"/>
<path d="M278.6 54.2 L284.2 59.4" stroke="#fff" stroke-width="3.6" stroke-linecap="round" fill="none"/>
<rect x="1187.1" y="41.1" width="19" height="4" fill="#787878"/>
<rect x="1187.1" y="48.9" width="4.5" height="3.9" rx="1" fill="#787878"/>
<rect x="1187.1" y="55.6" width="4.5" height="3.9" rx="1" fill="#787878"/>
<rect x="1194.5" y="48.9" width="4.5" height="3.9" rx="1" fill="#787878"/>
<rect x="1194.5" y="55.6" width="4.5" height="3.9" rx="1" fill="#787878"/>
<rect x="1201.6" y="48.9" width="4.5" height="3.9" rx="1" fill="#787878"/>
<rect x="1201.6" y="55.6" width="4.5" height="3.9" rx="1" fill="#787878"/>
<rect x="1248" y="39.7" width="6.8" height="3.3" fill="#fff"/>
<rect x="1248" y="45.1" width="6.8" height="3.3" fill="#fff"/>
<rect x="1248" y="50.5" width="6.8" height="3.3" fill="#fff"/>
<rect x="1248" y="56" width="6.8" height="3.3" fill="#fff"/>
<rect x="1256.1" y="39.7" width="6.8" height="3.3" fill="#fff"/>
<rect x="1256.1" y="45.1" width="6.8" height="3.3" fill="#fff"/>
<rect x="1256.1" y="50.5" width="6.8" height="3.3" fill="#fff"/>
<rect x="1256.1" y="56" width="6.8" height="3.3" fill="#fff"/>
<text x="10.6" y="19.7" font-family="'Liberation Sans',Arial,sans-serif" font-size="15.5" fill="#000" textLength="23.5" lengthAdjust="spacingAndGlyphs">File</text>
<text x="49.1" y="19.7" font-family="'Liberation Sans',Arial,sans-serif" font-size="15.5" fill="#000" textLength="71" lengthAdjust="spacingAndGlyphs">Instrument</text>
<text x="135.6" y="19.7" font-family="'Liberation Sans',Arial,sans-serif" font-size="15.5" fill="#000" textLength="63.4" lengthAdjust="spacingAndGlyphs">Response</text>
<text x="214.5" y="19.7" font-family="'Liberation Sans',Arial,sans-serif" font-size="15.5" fill="#000" textLength="56.6" lengthAdjust="spacingAndGlyphs">Stimulus</text>
<text x="285.7" y="19.7" font-family="'Liberation Sans',Arial,sans-serif" font-size="15.5" fill="#000" textLength="40.4" lengthAdjust="spacingAndGlyphs">Utility</text>
<text x="340.7" y="19.7" font-family="'Liberation Sans',Arial,sans-serif" font-size="15.5" fill="#000" textLength="33.1" lengthAdjust="spacingAndGlyphs">Help</text>
<rect x="4.6" y="756.7" width="53.0" height="20.9" rx="4.5" fill="#d4d4d4" stroke="#9e9e9e" stroke-width="1"/>
<text x="31.1" y="771.6" font-family="'Liberation Sans',Arial,sans-serif" font-size="14" fill="#000" text-anchor="middle">Tr 2</text>
<rect x="60.6" y="756.7" width="59.4" height="20.9" rx="4.5" fill="#d4d4d4" stroke="#9e9e9e" stroke-width="1"/>
<text x="90.3" y="771.6" font-family="'Liberation Sans',Arial,sans-serif" font-size="14" fill="#000" text-anchor="middle">Ch 1</text>
<rect x="123.5" y="756.7" width="68.6" height="20.9" rx="4.5" fill="#d4d4d4" stroke="#9e9e9e" stroke-width="1"/>
<text x="157.8" y="771.6" font-family="'Liberation Sans',Arial,sans-serif" font-size="14" fill="#000" text-anchor="middle">IntTrig</text>
<rect x="195.6" y="756.7" width="59.8" height="20.9" rx="4.5" fill="#d4d4d4" stroke="#9e9e9e" stroke-width="1"/>
<text x="225.5" y="771.6" font-family="'Liberation Sans',Arial,sans-serif" font-size="14" fill="#000" text-anchor="middle">Swp</text>
<rect x="258.5" y="756.7" width="71.9" height="20.9" rx="4.5" fill="#d4d4d4" stroke="#9e9e9e" stroke-width="1"/>
<text x="294.4" y="771.6" font-family="'Liberation Sans',Arial,sans-serif" font-size="14" fill="#000" text-anchor="middle">BW=10k</text>
<rect x="333.1" y="756.7" width="84.4" height="20.9" rx="4.5" fill="#d4d4d4" stroke="#9e9e9e" stroke-width="1"/>
<text x="375.3" y="771.6" font-family="'Liberation Sans',Arial,sans-serif" font-size="14" fill="#000" text-anchor="middle">C* 2-Port</text>
<rect x="420.6" y="756.7" width="65.7" height="20.9" rx="4.5" fill="#d4d4d4" stroke="#9e9e9e" stroke-width="1"/>
<text x="453.5" y="771.6" font-family="'Liberation Sans',Arial,sans-serif" font-size="14" fill="#a6a6a6" text-anchor="middle">SrcCal</text>
<rect x="489.4" y="756.7" width="53.3" height="20.9" rx="4.5" fill="#d4d4d4" stroke="#9e9e9e" stroke-width="1"/>
<text x="516.0" y="771.6" font-family="'Liberation Sans',Arial,sans-serif" font-size="14" fill="#a6a6a6" text-anchor="middle">Sim</text>
<rect x="545.4" y="756.7" width="59.8" height="20.9" rx="4.5" fill="#d4d4d4" stroke="#9e9e9e" stroke-width="1"/>
<text x="575.3" y="771.6" font-family="'Liberation Sans',Arial,sans-serif" font-size="14" fill="#a6a6a6" text-anchor="middle">Pulse</text>
<rect x="608.2" y="756.7" width="673.6" height="20.9" rx="4.5" fill="#d4d4d4" stroke="#9e9e9e" stroke-width="1"/>
<rect x="4.6" y="780.8" width="46.8" height="20.9" rx="4.5" fill="#d4d4d4" stroke="#9e9e9e" stroke-width="1"/>
<text x="28.0" y="795.5" font-family="'Liberation Sans',Arial,sans-serif" font-size="14" fill="#a6a6a6" text-anchor="middle">Svc</text>
<rect x="54.7" y="780.8" width="59.3" height="20.9" rx="4.5" fill="#d4d4d4" stroke="#9e9e9e" stroke-width="1"/>
<text x="84.3" y="795.5" font-family="'Liberation Sans',Arial,sans-serif" font-size="14" fill="#000" text-anchor="middle">RFOn</text>
<rect x="117.0" y="780.8" width="71.7" height="20.9" rx="4.5" fill="#d4d4d4" stroke="#9e9e9e" stroke-width="1"/>
<text x="152.8" y="795.5" font-family="'Liberation Sans',Arial,sans-serif" font-size="14" fill="#000" text-anchor="middle">UpdateOn</text>
<rect x="191.8" y="780.8" width="59.7" height="20.9" rx="4.5" fill="#d4d4d4" stroke="#9e9e9e" stroke-width="1"/>
<text x="221.7" y="795.5" font-family="'Liberation Sans',Arial,sans-serif" font-size="14" fill="#000" text-anchor="middle">IntRef</text>
<rect x="254.7" y="780.8" width="1027.1" height="20.9" rx="4.5" fill="#d4d4d4" stroke="#9e9e9e" stroke-width="1"/>
</svg>

</body>
</html>
